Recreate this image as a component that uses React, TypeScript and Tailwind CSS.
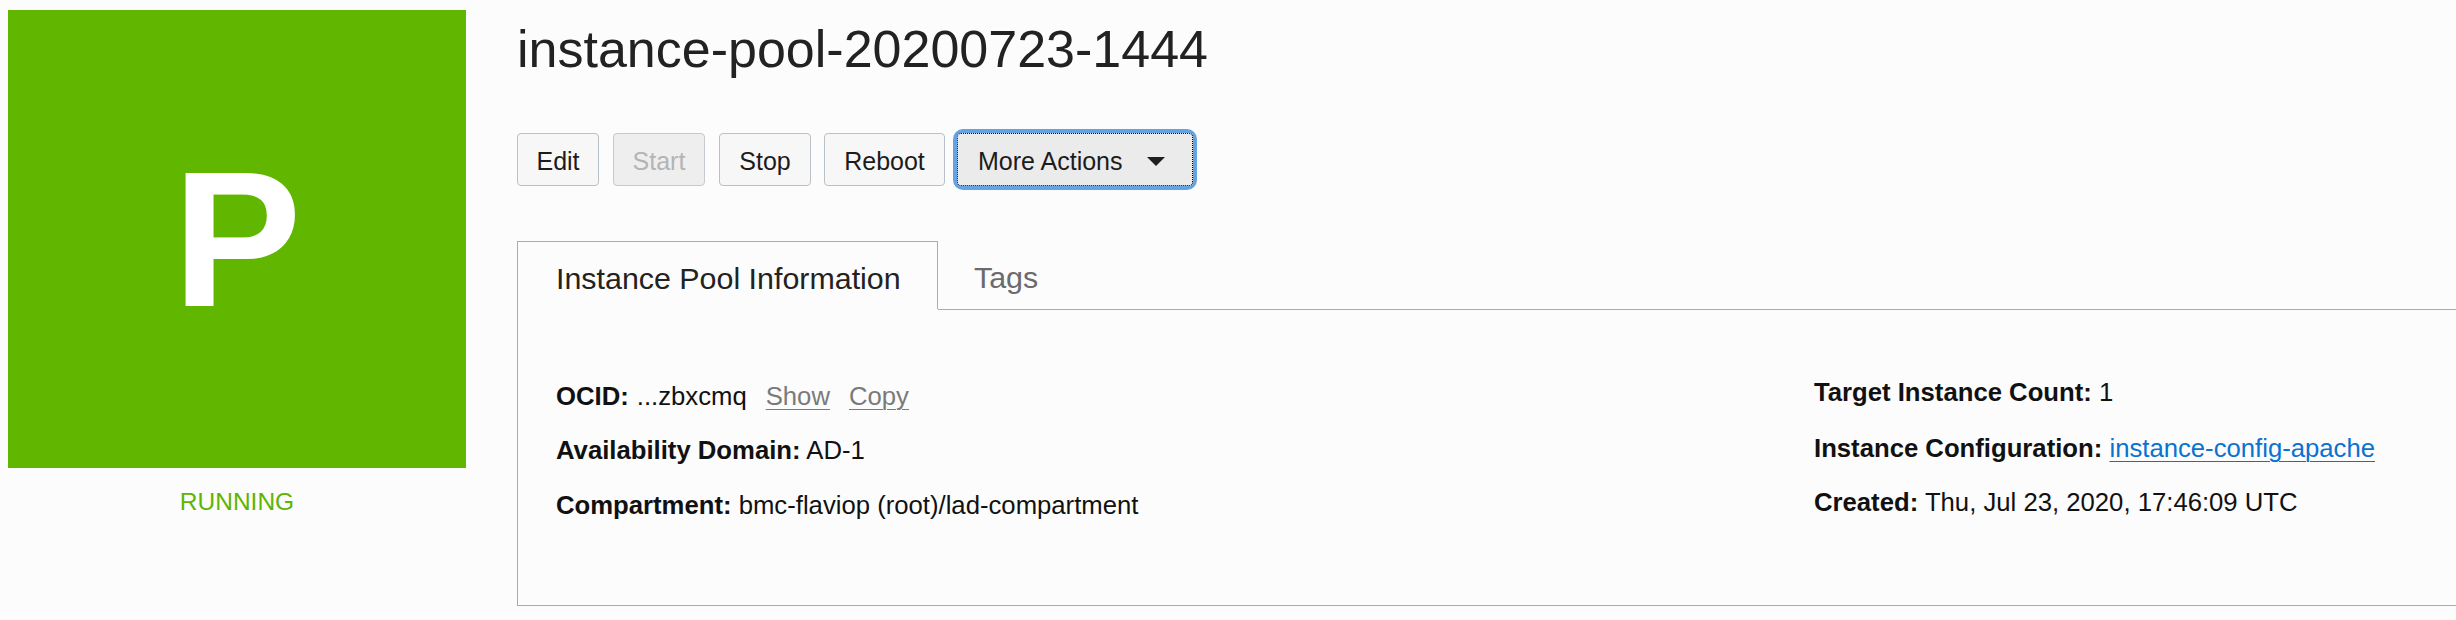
import React from "react";

const font = { fontFamily: '"Liberation Sans", Arial, Helvetica, sans-serif' };

function Btn({ label, w, disabled }: { label: string; w: number; disabled?: boolean }) {
  return (
    <div
      className={
        "h-[53px] rounded-[4px] border flex justify-center text-[25px] pt-[4px] leading-[47px] " +
        (disabled
          ? "bg-[#eeeeee] border-[#c5cad0] text-[#b4b4b4]"
          : "bg-[#f7f7f7] border-[#b9c0c8] text-[#1c1c1c]")
      }
      style={{ width: w }}
    >
      {label}
    </div>
  );
}

export default function App() {
  return (
    <div className="flex bg-[#fcfcfc] h-[620px] w-full overflow-hidden pl-[8px] pt-[10px]" style={font}>
      {/* left status tile */}
      <div className="w-[458px] shrink-0 flex flex-col items-center">
        <div className="w-[458px] h-[458px] bg-[#61b700] flex items-center justify-center">
          <span className="text-white font-bold text-[193px] leading-none">P</span>
        </div>
        <div className="mt-[20px] text-[24.5px] leading-[28px] text-[#5fb400]">RUNNING</div>
      </div>

      {/* right area */}
      <div className="ml-[51px] flex-1 flex flex-col min-w-0">
        <h1 className="mt-[9px] text-[52px] leading-[60px] text-[#222222]">
          instance-pool-20200723-1444
        </h1>

        <div className="mt-[54px] flex items-start">
          <Btn label="Edit" w={82} />
          <div className="ml-[14px]">
            <Btn label="Start" w={92} disabled />
          </div>
          <div className="ml-[14px]">
            <Btn label="Stop" w={92} />
          </div>
          <div className="ml-[13px]">
            <Btn label="Reboot" w={121} />
          </div>
          <div className="ml-[12px] rounded-[6px] shadow-[0_0_0_4px_#64a3e3]">
            <div className="w-[236px] h-[53px] rounded-[4px] border border-dotted border-black bg-[#ebebeb] flex items-center pl-[20px] text-[25px] text-[#1c1c1c]">
              <span className="pt-[4px] leading-[47px]">More Actions</span>
              <svg className="ml-auto mr-[27px] mt-[3px]" width="18" height="9" viewBox="0 0 18 9">
                <polygon points="0,0 18,0 9,9" fill="#1f1f1f" />
              </svg>
            </div>
          </div>
        </div>

        {/* panel */}
        <div className="mt-[55px] border-l border-b border-[#ababab]">
          <div className="flex items-start">
            <div className="w-[420px] h-[68px] border-t border-r border-[#ababab] pl-[38px] pt-[5px] leading-[62px] text-[30.4px] text-[#222222] whitespace-nowrap">
              Instance Pool Information
            </div>
            <div className="flex-1 h-[69px] border-b border-[#ababab] pl-[36px] pt-[5px] leading-[62px] text-[30.4px] text-[#6b6b6b]">
              Tags
            </div>
          </div>

          <div className="flex pt-[68px] pb-[86px] text-[25.7px] leading-[28px] text-[#111111]">
            <div className="w-[1296px] shrink-0 pl-[38px] pt-[4px] flex flex-col">
              <div className="mb-[26px] flex items-baseline whitespace-nowrap">
                <span className="font-bold">OCID:</span>
                <span className="ml-[8px]">...zbxcmq</span>
                <span className="ml-[19px] text-[#7a7a7a] underline underline-offset-[4px] decoration-[1px]">Show</span>
                <span className="ml-[19px] text-[#7a7a7a] underline underline-offset-[4px] decoration-[1px]">Copy</span>
              </div>
              <div className="mb-[27px] whitespace-nowrap">
                <span className="font-bold">Availability Domain:</span> AD-1
              </div>
              <div className="whitespace-nowrap">
                <span className="font-bold">Compartment:</span> bmc-flaviop (root)/lad-compartment
              </div>
            </div>
            <div className="flex flex-col whitespace-nowrap">
              <div className="mb-[28px]">
                <span className="font-bold">Target Instance Count:</span> 1
              </div>
              <div className="mb-[26px]">
                <span className="font-bold">Instance Configuration:</span>{" "}
                <span className="text-[#0a72d0] underline underline-offset-[4px] decoration-[1px]">instance-config-apache</span>
              </div>
              <div>
                <span className="font-bold">Created:</span> Thu, Jul 23, 2020, 17:46:09 UTC
              </div>
            </div>
          </div>
        </div>
      </div>
    </div>
  );
}
